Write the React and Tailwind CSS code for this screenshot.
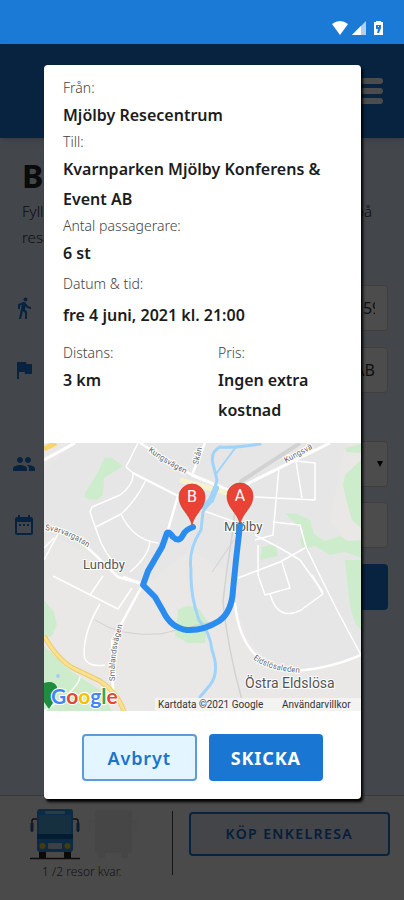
import { useState } from "react";
import {
  MdDateRange,
  MdDirectionsWalk,
  MdFlag,
  MdPeople,
} from "react-icons/md";

const PASSENGERS = ["1", "2", "3", "4", "5", "6"];

function StatusBar() {
  return (
    <div className="flex h-11 items-center justify-end gap-1 bg-[#1b7ad6] pt-3 pr-[18px] text-white">
      <svg width="16" height="14" viewBox="0 0 16 14" aria-hidden="true">
        <path d="M0 3Q8 -3 16 3L8 14Z" fill="currentColor" />
      </svg>
      <svg width="14" height="14" viewBox="0 0 14 14" aria-hidden="true">
        <path d="M0 14L14 0V14Z" fill="currentColor" opacity="0.65" />
        <path d="M0 14L9 5V14Z" fill="currentColor" />
      </svg>
      <svg width="16" height="16" viewBox="0 0 16 16" aria-hidden="true">
        <path d="M6 1h5v1h2v13H4V2h2z" fill="currentColor" />
        <path d="M6 5h5v3l-2 5H7l1-4H6z" fill="#1b7ad6" />
        <path d="M8 6h1v1H8z" fill="white" />
      </svg>
    </div>
  );
}

function Bus({ ghost }) {
  if (ghost) {
    return (
      <svg width="50" height="52" viewBox="0 0 50 52" aria-hidden="true">
        <g fill="#e9e9e9">
          <rect x="7" y="2" width="37" height="43" rx="3" />
          <rect x="10" y="43" width="7" height="7" rx="1" />
          <rect x="33" y="43" width="7" height="7" rx="1" />
          <path d="M1 12h6v2H3v10H1zM49 12h-5v2h3v10h2z" opacity="0.5" />
        </g>
      </svg>
    );
  }
  return (
    <svg width="50" height="52" viewBox="0 0 50 52" aria-hidden="true">
      <path d="M2 24V13q0-2 2-2h4M48 24V13q0-2-2-2h-4" fill="none" stroke="#333" strokeWidth="1.5" />
      <path d="M2 15v8M48 15v8" stroke="#1e5fa8" strokeWidth="3" />
      <rect x="9" y="43" width="7" height="7" fill="#222" />
      <rect x="34" y="43" width="7" height="7" fill="#222" />
      <rect x="7" y="1" width="36" height="43" rx="3" fill="#2590e8" />
      <rect x="9" y="7" width="32" height="19" fill="#4aa0d4" />
      <rect x="15" y="3" width="20" height="3" rx="1" fill="#8cc8ee" />
      <rect x="7" y="26" width="36" height="5" fill="#0b5fa8" />
      <rect x="18" y="35" width="14" height="6" rx="1" fill="#c8d8e4" />
      <circle cx="12.5" cy="38" r="3" fill="#e8c52a" />
      <circle cx="37.5" cy="38" r="3" fill="#e8c52a" />
      <path d="M0 50.5h50" stroke="#3a2a20" strokeWidth="1.5" />
    </svg>
  );
}

function FormRow({ icon: Icon, label, htmlFor, children }) {
  return (
    <div className="flex items-center">
      <label htmlFor={htmlFor} aria-label={label} className="w-11 shrink-0 pl-3 text-[#1976d2]">
        <Icon size={24} />
      </label>
      {children}
    </div>
  );
}

function BookingPage() {
  const field =
    "h-[46px] w-full min-w-0 rounded-sm border border-[#d8d4c8] bg-white px-3 text-base text-[#333]";

  return (
    <div className="flex flex-1 flex-col bg-[#e2e9fb]">
      <header className="flex h-[94px] items-center justify-end bg-[#1976d2] pr-[21px] shadow-md">
        <button type="button" aria-label="Meny" className="flex w-7 flex-col gap-1">
          <span className="h-[6px] rounded-full bg-white" />
          <span className="h-[6px] rounded-full bg-white" />
          <span className="h-[6px] rounded-full bg-white" />
        </button>
      </header>

      <main className="flex-1">
        <div className="px-[22px] pt-4">
          <h1 className="text-[32px] leading-11 font-bold text-[#222]">Boka</h1>
          <div className="text-[15px] leading-[26px] font-light text-[#333]">
            <p className="flex justify-between pr-[10px]">
              <span>Fyll i</span>
              <span>på</span>
            </p>
            <p>resa</p>
          </div>
        </div>

        <form className="mt-[35px] flex flex-col pr-4">
          <FormRow icon={MdDirectionsWalk} label="Från" htmlFor="from">
            <input id="from" className={field} defaultValue="Mjölby Resecentrum, Järnvägsgatan 112 59" />
          </FormRow>
          <div className="mt-4">
            <FormRow icon={MdFlag} label="Till" htmlFor="to">
              <input id="to" className={`${field} text-right`} defaultValue="Konferens & Event AB" />
            </FormRow>
          </div>
          <div className="mt-12">
            <FormRow icon={MdPeople} label="Antal passagerare" htmlFor="count">
              <div className="relative w-full">
                <select id="count" defaultValue="6" className={`${field} appearance-none`}>
                  {PASSENGERS.map((n) => (
                    <option key={n}>{n}</option>
                  ))}
                </select>
                <svg width="6" height="6" viewBox="0 0 6 6" className="absolute top-5 right-[5px]" aria-hidden="true">
                  <path d="M0 0h6L3 6z" fill="black" />
                </svg>
              </div>
            </FormRow>
          </div>
          <div className="mt-[15px]">
            <FormRow icon={MdDateRange} label="Datum" htmlFor="date">
              <input id="date" className={field} />
            </FormRow>
          </div>
          <button type="button" aria-label="Boka" className="mt-4 ml-11 h-[46px] rounded-sm bg-[#1976d2]" />
        </form>
      </main>

      <footer className="flex h-[105px] items-start border-t border-[#bbb] bg-[#f8f8f8] pt-3 pr-[14px]">
        <div className="flex w-[44%] flex-col items-center pr-2">
          <div className="flex gap-2 pl-1">
            <Bus />
            <Bus ghost />
          </div>
          <p className="pt-1 text-xs font-light text-[#444]">1 /2 resor kvar.</p>
        </div>
        <div className="mt-[3px] h-16 border-l border-[#444]" />
        <button
          type="button"
          className="mt-1 ml-4 h-11 flex-1 rounded-sm border-2 border-[#1976d2] bg-[#dfe8f5] text-sm font-semibold tracking-widest text-[#1565c0]"
        >
          KÖP ENKELRESA
        </button>
      </footer>
    </div>
  );
}

function Pin({ x, y, letter }) {
  return (
    <g transform={`translate(${x} ${y})`}>
      <path
        d="M0 0C-2-11-13-16-13-28A13 13 0 0 1 13-28C13-16 2-11 0 0Z"
        fill="#ea4335"
        stroke="#c5352a"
        strokeWidth="0.7"
      />
      <text y="-23" textAnchor="middle" fontSize="16" fill="white">
        {letter}
      </text>
    </g>
  );
}

function RouteMap() {
  return (
    <svg
      viewBox="44 443 317 268"
      role="img"
      aria-label="Karta över resan"
      className="block h-auto w-full bg-[#e9e8e6] font-[Roboto,sans-serif]"
    >
      {/* built-up areas */}
      <path d="M75 443H345L330 520L361 560V655Q320 672 290 671Q250 660 236 605L225 570L190 550L145 585L44 530V470Z" fill="#e6e6e6" />

      {/* parks */}
      <g fill="#cdeccc">
        <path d="M105 457L112 458L123 466L104 478L103 495L97 500L85 498L85 493L92 482L98 472Z" />
        <path d="M361 460V528L352 520L347 503L343 485L345 475ZM345 448L361 444V453L346 452Z" />
        <path d="M285 513L297 514L310 520L314 534L325 541L340 536L348 541L361 540V558L345 552L330 555L315 546L303 549L300 540L304 530L295 523Z" />
        <path d="M262 547L275 544L278 556L260 560Z" />
        <path d="M345 560H361V630L355 623L350 606Z" />
        <path d="M178 610Q190 602 200 610L208 622L205 643L188 643L175 636Z" />
        <path d="M44 600L54 612L57 625L52 636L44 638Z" />
        <path d="M44 646L72 672L100 690L112 711H44Z" />
      </g>
      <circle cx="58" cy="676" r="2" fill="#a9cdf5" />

      {/* railway */}
      <g fill="none" stroke="#d2d2d2">
        <path d="M300 443L240 482" strokeWidth="4" />
        <path d="M240 482Q235 500 233 530Q225 580 223 603Q228 650 242 700" strokeWidth="1.5" />
        <path d="M234 540L212 572M95 620Q120 637 160 634L220 620" strokeWidth="1" />
      </g>

      {/* streets */}
      <g fill="none" stroke="#fff" strokeLinejoin="round">
        <g strokeWidth="1.5">
          <path d="M138 443L126 467L133 473Q134 485 120 495L92 507L90 512L97 532Q104 555 120 568" />
          <path d="M96 527L121 514Q135 502 146 480" />
          <path d="M121 514Q133 540 158 543M150 540Q150 555 130 572" />
          <path d="M44 548L54 538M60 530L44 560" />
          <path d="M53 576L118 609L132 588M90 595L103 576M100 604Q84 630 84 655Q86 668 105 665" />
          <path d="M255 497L315 500V463L296 461L302 498M279 467L273 535L255 540" />
          <path d="M273 522L300 525L306 547L323 582L337 610L361 655" />
          <path d="M255 535L280 548L300 560L323 592M238 578L280 562L305 548M258 545L258 575" />
          <path d="M258 575L265 595L290 588L282 562M270 594Q278 622 301 610L323 594M323 594L312 575" />
          <path d="M196 508L235 522" />
        </g>
        <g strokeWidth="2.5">
          <path d="M44 460L75 443" strokeWidth="3" />
          <path d="M133 473L178 496L167 533M140 443L192 475L205 443" />
          <path d="M192 475L240 495L247 484L330 443" strokeWidth="3" />
          <path d="M44 530Q70 530 90 550L118 577L143 584L112 641L113 690" />
          <path d="M123 577L143 584" />
          <path d="M235 603Q240 660 285 671Q325 671 361 655" />
          <path d="M44 711Q78 690 80 677" strokeWidth="1.5" />
        </g>
      </g>
      <path d="M180 480L235 495" stroke="#f7f2cf" strokeWidth="5" />
      <g fill="none">
        <path d="M44 636Q58 660 73 668L100 681Q117 692 124 711" stroke="#eccb6d" strokeWidth="5" />
        <path d="M44 636Q58 660 73 668L100 681Q117 692 124 711" stroke="#fbe18d" strokeWidth="3" />
        <path d="M44 449L56 443" stroke="#f8d56b" strokeWidth="5" />
      </g>

      {/* river */}
      <g fill="none" stroke="#9fd3fa" strokeLinecap="round">
        <path d="M260 444Q235 448 220 447Q210 452 213 464L217 480L213 495L203 512L201 530Q188 550 191 570Q190 595 199 620Q210 632 212 650Q220 672 210 685L200 697" strokeWidth="3" />
        <path d="M236 447L224 463L216 474" strokeWidth="2" />
        <path d="M216 488L211 500L204 507" strokeWidth="6" />
      </g>

      {/* labels */}
      <g fill="#5f6368" stroke="#fff" strokeWidth="2" paintOrder="stroke" fontSize="8">
        <path id="kungsvagen" d="M148 451Q165 464 192 477" fill="none" stroke="none" />
        <text><textPath href="#kungsvagen">Kungsvägen</textPath></text>
        <path id="kungsvagen2" d="M286 463L326 441" fill="none" stroke="none" />
        <text><textPath href="#kungsvagen2">Kungsvä</textPath></text>
        <path id="skane" d="M198 465L205 435" fill="none" stroke="none" />
        <text><textPath href="#skane">Skån</textPath></text>
        <path id="svarv" d="M45 530Q68 532 95 553" fill="none" stroke="none" />
        <text><textPath href="#svarv">Svarvargatan</textPath></text>
        <path id="smaland" d="M115 681Q113 650 126 615" fill="none" stroke="none" />
        <text><textPath href="#smaland">Smålandsvägen</textPath></text>
        <path id="eldslo" d="M253 659Q270 672 306 673" fill="none" stroke="none" />
        <text><textPath href="#eldslo">Eldslösaleden</textPath></text>
        <g fontSize="13" fill="#555">
          <text x="83" y="569">Lundby</text>
          <text x="224" y="531">Mjölby</text>
          <text x="245" y="688" fontSize="14">Östra Eldslösa</text>
        </g>
      </g>

      {/* route */}
      <path
        d="M240 525L236 560L233 590Q232 612 219 621Q203 631 187 630Q171 628 163 611L155 597L143 585L148 571L162 547L167 533Q169 531 173 537Q179 543 183 535Q185 530 193 527"
        fill="none"
        stroke="#2b8cf0"
        strokeWidth="6"
        strokeLinejoin="round"
        strokeLinecap="round"
      />
      <Pin x={192} y={525} letter="B" />
      <Pin x={240} y={524} letter="A" />

      {/* attribution */}
      <path d="M44 683Q54 680 57 687Q56 700 49 709L44 702Z" fill="#1e8e3e" />
      <text x="51" y="704" fontSize="21" fontWeight="700" fontFamily="Lato, sans-serif" stroke="#fff" strokeWidth="2" paintOrder="stroke">
        <tspan fill="#4285f4">G</tspan>
        <tspan fill="#ea4335">o</tspan>
        <tspan fill="#fbbc05">o</tspan>
        <tspan fill="#4285f4">g</tspan>
        <tspan fill="#34a853">l</tspan>
        <tspan fill="#ea4335">e</tspan>
      </text>
      <rect x="155" y="698" width="206" height="13" fill="#f5f5f5" opacity="0.8" />
      <g fontSize="10" fill="#333">
        <text x="158" y="708">Kartdata ©2021 Google</text>
        <text x="282" y="708">Användarvillkor</text>
      </g>
    </svg>
  );
}

function Detail({ label, children, className = "" }) {
  return (
    <div className={className}>
      <dt className="text-sm leading-6 font-light text-[#444]">{label}</dt>
      <dd className="text-base leading-[30px] font-semibold text-[#1c1c1c]">{children}</dd>
    </div>
  );
}

function ConfirmDialog({ onClose }) {
  return (
    <div
      role="dialog"
      aria-modal="true"
      aria-label="Bekräfta resa"
      className="mt-[21px] mr-[43px] ml-11 rounded-sm bg-white shadow-[2px_3px_3px_#000]"
    >
      <dl className="px-[19px] pt-[11px] pb-[18px]">
        <Detail label="Från:">Mjölby Resecentrum</Detail>
        <Detail label="Till:">
          Kvarnparken Mjölby Konferens & Event AB
        </Detail>
        <Detail label="Antal passagerare:">6 st</Detail>
        <Detail label="Datum & tid:" className="flex flex-col gap-1 pt-1">
          fre 4 juni, 2021 kl. 21:00
        </Detail>
        <div className="grid grid-cols-9 pt-[11px]">
          <Detail label="Distans:" className="col-span-5">3 km</Detail>
          <Detail label="Pris:" className="col-span-4">Ingen extra kostnad</Detail>
        </div>
      </dl>

      <RouteMap />

      <div className="grid grid-cols-2 gap-3 px-[38px] pt-[23px] pb-[18px]">
        <button
          type="button"
          onClick={onClose}
          className="h-[47px] rounded-sm border-2 border-[#5a9bdc] bg-[#e3f5ff] text-lg font-semibold tracking-wider text-[#1b74cc]"
        >
          Avbryt
        </button>
        <button
          type="button"
          onClick={onClose}
          className="h-[47px] rounded-sm bg-[#1976d2] text-lg font-bold tracking-wider text-white"
        >
          SKICKA
        </button>
      </div>
    </div>
  );
}

export default function App() {
  const [open, setOpen] = useState(true);

  return (
    <div className="flex min-h-screen flex-col font-['Noto_Sans',sans-serif]">
      <StatusBar />
      <div className="relative flex flex-1 flex-col">
        <BookingPage />
        {open && (
          <div className="absolute inset-0 bg-black/70">
            <ConfirmDialog onClose={() => setOpen(false)} />
          </div>
        )}
      </div>
    </div>
  );
}
